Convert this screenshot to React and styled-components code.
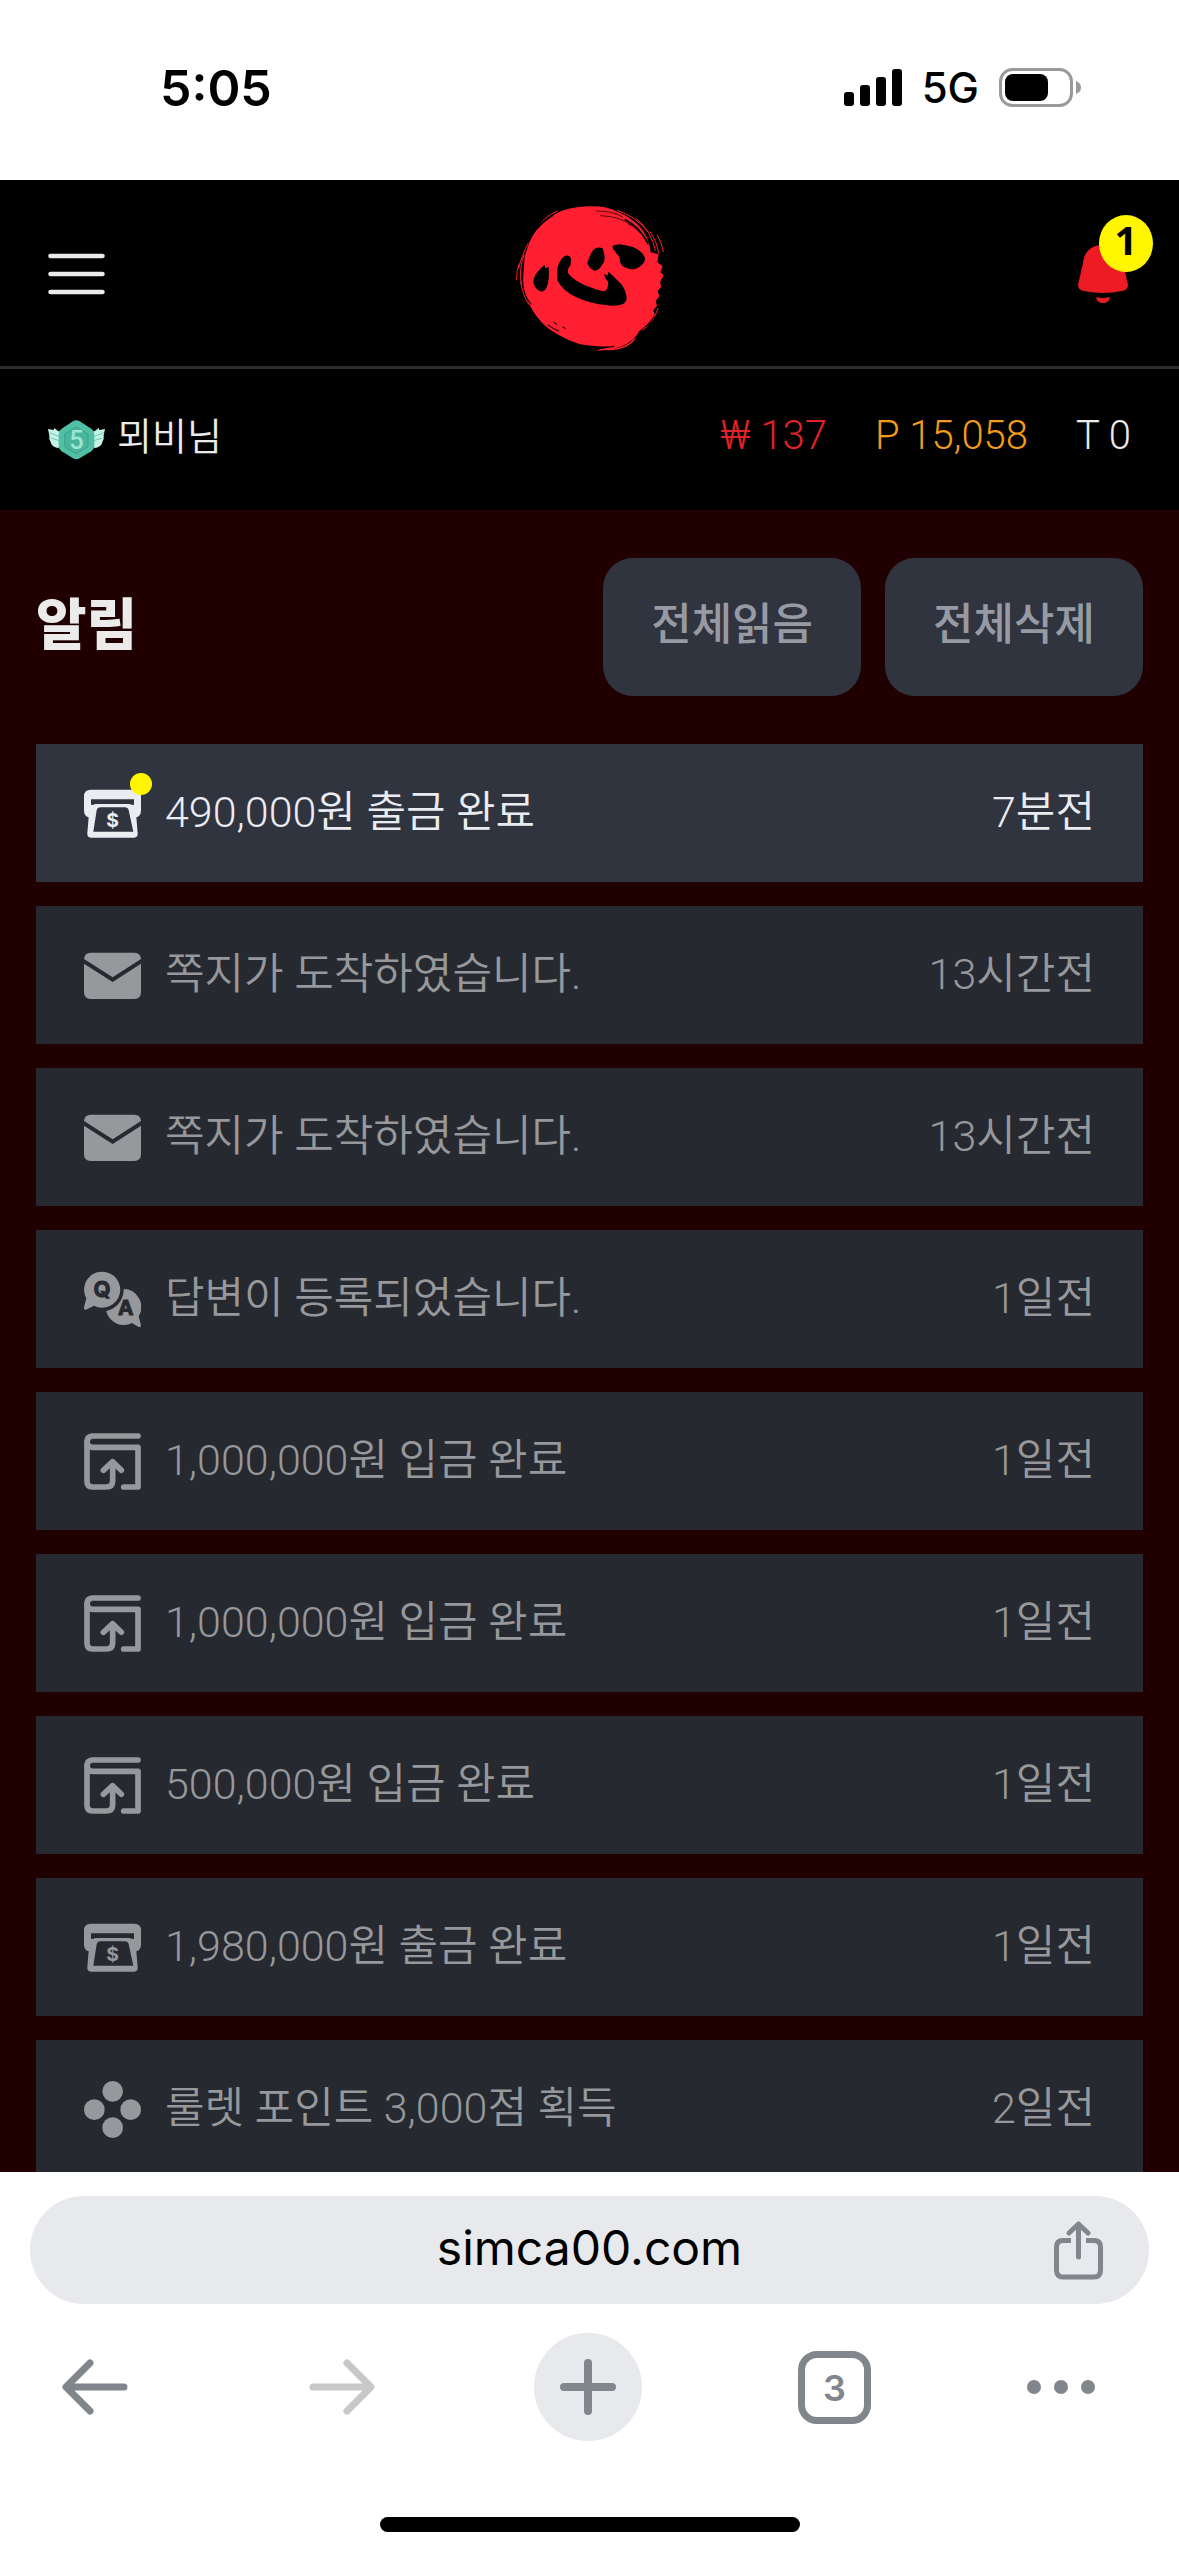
import styled, { createGlobalStyle } from "styled-components";

const GlobalStyle = createGlobalStyle`
  * {
    box-sizing: border-box;
  }

  body {
    margin: 0;
    background: #ffffff;
    font-family: Roboto, "Noto Sans CJK KR", sans-serif;
    font-weight: 350;
  }

  button {
    border: 0;
    padding: 0;
    background: none;
    font: inherit;
    color: inherit;
    cursor: pointer;
  }

  svg {
    display: block;
    flex: none;
  }
`;

const Screen = styled.div`
  display: flex;
  flex-direction: column;
  height: 100vh;
`;

/* phone status bar */

const StatusBar = styled.div`
  display: flex;
  flex: none;
  justify-content: space-between;
  align-items: center;
  height: 180px;
  padding: 0 98px 4px 160px;
  color: #000000;
  font-family: Inter, sans-serif;
`;

const Clock = styled.time`
  font-size: 50px;
  font-weight: 600;
  line-height: 60px;
`;

const Signals = styled.div`
  display: flex;
  align-items: center;
  gap: 20px;
`;

const Network = styled.span`
  font-size: 42px;
  font-weight: 500;
  line-height: 48px;
`;

/* site header */

const Header = styled.header`
  display: grid;
  flex: none;
  grid-template-columns: 1fr auto 1fr;
  align-items: center;
  padding: 14px 48px 12px;
  border-bottom: 3px solid #2b2b2b;
  background: #000000;
`;

const MenuButton = styled.button`
  justify-self: start;
  color: #ebebeb;
`;

const HomeLink = styled.a`
  display: block;
`;

const BellButton = styled.button`
  position: relative;
  display: flex;
  justify-self: end;
  justify-content: center;
  width: 57px;
`;

const BellCount = styled.span`
  position: absolute;
  top: -30px;
  right: -22px;
  width: 54px;
  height: 57px;
  border-radius: 50%;
  background: #fff600;
  color: #000000;
  font-family: "Noto Sans", sans-serif;
  font-size: 40px;
  font-weight: 700;
  line-height: 50px;
  text-align: center;
`;

const UserBar = styled.div`
  display: flex;
  flex: none;
  justify-content: space-between;
  align-items: center;
  height: 141px;
  padding: 0 48px;
  background: #000000;
  font-size: 40px;
  line-height: 48px;
`;

const User = styled.div`
  display: flex;
  align-items: center;
  gap: 12px;
  color: #ebebeb;
`;

const UserName = styled.span`
  padding-bottom: 6px;
  font-size: 38px;
`;

const Balances = styled.div`
  display: flex;
  gap: 48px;
  padding-bottom: 8px;
`;

const Balance = styled.span`
  color: ${(props) => props.$color};
`;

/* notifications */

const Content = styled.main`
  flex: 1;
  min-height: 0;
  padding: 48px 36px 0;
  overflow: hidden;
  background: #200000;
`;

const TitleRow = styled.div`
  display: flex;
  align-items: center;
  gap: 24px;
  margin-bottom: 48px;
`;

const Title = styled.h1`
  flex: 1;
  margin: 0;
  padding-bottom: 4px;
  color: #ebebeb;
  font-size: 55px;
  font-weight: 900;
  line-height: 60px;
`;

const ActionButton = styled.button`
  && {
    height: 138px;
    padding: 0 48px 12px;
    border-radius: 30px;
    background: #30343f;
    color: #979aa3;
    font-size: 44px;
    font-weight: 500;
  }
`;

const List = styled.ul`
  display: flex;
  flex-direction: column;
  gap: 24px;
  margin: 0;
  padding: 0;
  list-style: none;
`;

const Item = styled.li`
  display: flex;
  align-items: center;
  height: 138px;
  padding: 0 48px;
  background: ${(props) => (props.$unread ? "#30343f" : "#262a30")};
  color: ${(props) => (props.$unread ? "#ebecf1" : "#97989b")};
  font-size: 43px;
  line-height: 60px;
`;

const ItemIcon = styled.span`
  position: relative;
  margin-right: 24px;
`;

const UnreadDot = styled.span`
  position: absolute;
  top: -12px;
  right: -11px;
  width: 22px;
  height: 22px;
  border-radius: 50%;
  background: #fff600;
`;

const ItemText = styled.span`
  flex: 1;
  padding-bottom: 2px;
`;

const ItemTime = styled.time`
  padding-bottom: 2px;
`;

/* browser toolbar */

const Browser = styled.footer`
  flex: none;
  padding: 24px 30px;
  background: #ffffff;
  color: #80868b;
  font-family: Inter, sans-serif;
`;

const AddressBar = styled.div`
  display: grid;
  grid-template-columns: 1fr auto 1fr;
  align-items: center;
  height: 108px;
  padding: 0 46px;
  border-radius: 54px;
  background: #e8e9ed;
`;

const Address = styled.button`
  && {
    grid-column: 2;
    padding-bottom: 4px;
    color: #000000;
    font-size: 48px;
    font-weight: 400;
    line-height: 60px;
  }
`;

const ShareButton = styled.button`
  justify-self: end;
`;

const Toolbar = styled.nav`
  display: flex;
  justify-content: space-between;
  margin-top: 29px;
  padding: 0 14px 0 11px;
`;

const ToolButton = styled.button`
  && {
    display: flex;
    align-items: center;
    justify-content: ${(props) => (props.$start ? "flex-start" : "center")};
    width: 108px;
    height: 108px;
    border-radius: 50%;
    background: ${(props) => (props.$filled ? "#e8e9ed" : "none")};
  }

  &:disabled {
    color: #c8c8c8;
  }
`;

const TabCount = styled.span`
  width: 73px;
  height: 73px;
  border: 7px solid #80868b;
  border-radius: 19px;
  font-size: 36px;
  font-weight: 600;
  line-height: 60px;
  text-align: center;
`;

const HomeIndicator = styled.div`
  width: 420px;
  height: 15px;
  margin: 76px auto 0;
  border-radius: 8px;
  background: #000000;
`;

function SignalIcon() {
  return (
    <svg width="58" height="38" viewBox="0 0 58 38" fill="#000000">
      <rect x="0" y="23" width="10" height="14" rx="3" />
      <rect x="16" y="16" width="10" height="21" rx="3" />
      <rect x="32" y="8" width="10" height="29" rx="3" />
      <rect x="48" y="0" width="10" height="37" rx="3" />
    </svg>
  );
}

function BatteryIcon() {
  return (
    <svg width="82" height="40" viewBox="0 0 82 40">
      <rect x="1.5" y="1.5" width="71" height="36" rx="12" fill="none" stroke="#999999" strokeWidth="3" />
      <rect x="6" y="6" width="43" height="27" rx="8" fill="#000000" />
      <path d="M77 13q5 2 5 6.500t-5 6.500z" fill="#999999" />
    </svg>
  );
}

function MenuIcon() {
  return (
    <svg width="57" height="42" viewBox="0 0 57 42" stroke="currentColor" strokeWidth="4.500" strokeLinecap="round">
      <path d="M2.500 3H54.500M2.500 21H54.500M2.500 39H54.500" />
    </svg>
  );
}

function Logo() {
  return (
    <svg width="150" height="160" viewBox="105 27 450 480" role="img" aria-label="simca">
      <path
        fill="#ff1f30"
        d="M148 172Q166 128 210 98L226 87Q262 66 325 64Q378 62 412 80Q452 96 478 124Q506 152 512 202L536 208L532 232L548 244L541 262L551 270L540 292L544 306L533 318L538 334L527 348L531 362L520 376L524 390Q508 416 478 438Q466 462 438 478Q404 497 344 497Q372 490 392 484Q340 486 300 478Q262 466 232 448Q180 420 152 366Q126 318 130 272L134 214Z"
      />
      <g fill="none" stroke="#ff1f30" strokeLinecap="round">
        <path strokeWidth="3" d="M144 176Q122 220 116 250M118 236Q108 258 110 284M132 210Q116 250 124 300M122 290Q128 330 146 358" />
        <path strokeWidth="3" d="M180 118Q196 94 232 78M412 76Q470 96 504 140M470 102Q514 138 526 196M532 150Q546 174 550 200M510 140Q530 168 536 204" />
        <path strokeWidth="3" d="M520 402Q506 424 486 436M534 370Q528 392 514 408" />
        <path strokeWidth="4" d="M464 462Q438 494 380 494" />
      </g>
      <g fill="none" stroke="#000000" strokeLinecap="round">
        <path strokeWidth="5" d="M172 130Q188 108 216 92M436 104Q480 126 504 176" />
        <path strokeWidth="2" d="M362 92Q420 94 456 122Q484 144 500 166M350 78Q400 78 428 96M446 118L470 126L482 142" />
        <path strokeWidth="3" d="M132 320Q140 344 154 358M204 420Q220 432 236 438M222 412L230 418M248 426L256 430M500 424Q514 412 522 396M350 492Q380 488 402 484" />
      </g>
      <g fill="#000000">
        <path d="M172 262Q182 248 194 240L196 250L206 246Q209 284 201 304Q196 320 183 320Q163 312 160 290Q162 272 172 262Z" />
        <path d="M254 213Q270 208 273 222L272 240Q261 252 264 264Q284 292 335 308Q360 318 374 319Q386 310 384 290L376 280L372 266L382 272L386 260L394 268Q412 286 426 300Q440 322 440 342Q436 358 420 360Q400 364 376 360Q330 356 288 336Q248 318 232 286Q226 234 254 213Z" />
        <path d="M340 194Q352 184 368 190L374 212Q376 230 366 240Q356 258 344 257Q326 250 322 234Q328 212 340 194Z" />
        <path d="M398 182Q414 174 432 180Q464 184 482 200Q496 212 495 226Q488 242 474 248Q460 256 442 250Q424 244 420 230Q420 214 410 206Q404 198 398 190Z" />
      </g>
    </svg>
  );
}

function BellIcon() {
  return (
    <svg width="50" height="58" viewBox="0 0 50 58" fill="#ed1c24">
      <path d="M25 0C12 0 6 8 5 18L0 40Q0 45 6 46Q25 50 44 46Q50 45 50 40L45 18C44 8 38 0 25 0Z" />
      <path d="M18 52Q25 54 32 52Q31 58 25 58T18 52Z" />
    </svg>
  );
}

function LevelIcon() {
  return (
    <svg width="57" height="40" viewBox="0 0 171 120">
      <g fill="#c5f3e6">
        <path d="M0 27L17 30L19 24L30 33L44 36V80L28 84Q10 80 8 66Q2 58 4 46Z" />
        <path d="M171 27L154 30L152 24L141 33L127 36V80L143 84Q161 80 163 66Q169 58 167 46Z" />
      </g>
      <path d="M4 38L34 50M8 54L34 62M167 38L137 50M163 54L137 62" stroke="#6fc9b3" strokeWidth="3" />
      <path
        d="M76 3Q85 -2 94 3L130 26Q139 32 139 42V78Q139 88 130 94L95 115Q85 121 75 115L41 94Q32 88 32 78V42Q32 32 41 26Z"
        fill="#4fc0a5"
      />
      <path d="M85 21L120 42V80L85 101L50 80V42Z" fill="#49b59c" stroke="#35937d" strokeWidth="2" />
      <text x="85" y="87" fill="#9be6d3" fontFamily="Roboto, sans-serif" fontSize="76" fontWeight="500" textAnchor="middle">
        5
      </text>
    </svg>
  );
}

function WithdrawIcon() {
  return (
    <svg width="57" height="57" viewBox="0 0 171 171" fill="currentColor">
      <path
        fillRule="evenodd"
        d="M20 14H151Q171 14 171 34V76Q171 94 157 97L161 145Q162 158 150 158H21Q9 158 10 145L14 97Q0 94 0 76V34Q0 14 20 14ZM21 43V60Q30 60 34 57H137Q141 60 150 60V43ZM50 67Q40 67 38 76L28 140H148L134 76Q132 67 122 67Z"
      />
      <text x="86" y="125" fontFamily="Inter, sans-serif" fontSize="58" fontWeight="700" textAnchor="middle">
        $
      </text>
    </svg>
  );
}

function MessageIcon() {
  return (
    <svg width="57" height="57" viewBox="0 0 171 171" fill="currentColor">
      <path d="M0 36Q2 17 20 17H151Q169 17 171 36L86 91Z" />
      <path d="M0 50L86 105L171 50V136Q171 156 151 156H20Q0 156 0 136Z" />
    </svg>
  );
}

function AnswerIcon() {
  return (
    <svg width="57" height="57" viewBox="0 0 171 171" fill="currentColor" fontFamily="Inter, sans-serif" fontWeight="700" textAnchor="middle">
      <path d="M118 54A54 54 0 0 1 164 136L171 163Q171 170 164 168L144 156A54 54 0 1 1 118 54Z" />
      <circle cx="54" cy="56" r="65" fill="#262a30" />
      <path d="M54 2A54 54 0 1 1 30 104L6 116Q-1 117 0 109L7 82A54 54 0 0 1 54 2Z" />
      <g fill="#262a30" stroke="#262a30" strokeWidth="3">
        <text x="54" y="78" fontSize="66">
          Q
        </text>
        <text x="125" y="133" fontSize="62">
          A
        </text>
      </g>
    </svg>
  );
}

function DepositIcon() {
  return (
    <svg width="57" height="57" viewBox="0 0 171 171" fill="none" stroke="currentColor" strokeWidth="17" strokeLinecap="round" strokeLinejoin="round">
      <path d="M162 9H24Q9 11 9 26V145Q9 162 26 162H66Q86 162 86 143V88M58 112L86 86L112 112" />
      <path d="M9 26Q11 43 26 43H162V162H119" />
    </svg>
  );
}

function PointIcon() {
  return (
    <svg width="57" height="57" viewBox="0 0 171 171" fill="currentColor">
      <circle cx="86" cy="31" r="31" />
      <circle cx="31" cy="86" r="31" />
      <circle cx="140" cy="86" r="31" />
      <circle cx="86" cy="140" r="31" />
    </svg>
  );
}

function ShareIcon() {
  return (
    <svg width="49" height="59" viewBox="0 0 49 59" fill="none" stroke="currentColor" strokeWidth="5" strokeLinecap="round" strokeLinejoin="round">
      <path strokeLinecap="butt" d="M17 19.500H9Q2.500 19.500 2.500 26V49Q2.500 56 9 56H40Q46.500 56 46.500 49V26Q46.500 19.500 40 19.500H32" />
      <path d="M24.500 36V3.500M15 12L24.500 3L34 12" />
    </svg>
  );
}

function ArrowIcon({ forward }) {
  return (
    <svg width="66" height="56" viewBox="0 0 66 56" fill="none" stroke="currentColor" strokeWidth="7" strokeLinecap="round" strokeLinejoin="round">
      <path d={forward ? "M4 28H61M38 4L62 28L38 52" : "M62 28H5M28 4L4 28L28 52"} />
    </svg>
  );
}

function PlusIcon() {
  return (
    <svg width="56" height="56" viewBox="0 0 56 56" stroke="currentColor" strokeWidth="8" strokeLinecap="round">
      <path d="M4 28H52M28 4V52" />
    </svg>
  );
}

function MoreIcon() {
  return (
    <svg width="68" height="14" viewBox="0 0 68 14" fill="currentColor">
      <circle cx="7" cy="7" r="7" />
      <circle cx="34" cy="7" r="7" />
      <circle cx="61" cy="7" r="7" />
    </svg>
  );
}

const icons = {
  withdraw: WithdrawIcon,
  message: MessageIcon,
  answer: AnswerIcon,
  deposit: DepositIcon,
  point: PointIcon,
};

const notifications = [
  { id: 1, type: "withdraw", text: "490,000원 출금 완료", time: "7분전", unread: true },
  { id: 2, type: "message", text: "쪽지가 도착하였습니다.", time: "13시간전" },
  { id: 3, type: "message", text: "쪽지가 도착하였습니다.", time: "13시간전" },
  { id: 4, type: "answer", text: "답변이 등록되었습니다.", time: "1일전" },
  { id: 5, type: "deposit", text: "1,000,000원 입금 완료", time: "1일전" },
  { id: 6, type: "deposit", text: "1,000,000원 입금 완료", time: "1일전" },
  { id: 7, type: "deposit", text: "500,000원 입금 완료", time: "1일전" },
  { id: 8, type: "withdraw", text: "1,980,000원 출금 완료", time: "1일전" },
  { id: 9, type: "point", text: "룰렛 포인트 3,000점 획득", time: "2일전" },
];

function Notification({ type, text, time, unread }) {
  const Icon = icons[type];
  return (
    <Item $unread={unread}>
      <ItemIcon>
        <Icon />
        {unread && <UnreadDot />}
      </ItemIcon>
      <ItemText>{text}</ItemText>
      <ItemTime>{time}</ItemTime>
    </Item>
  );
}

function App() {
  return (
    <Screen>
      <GlobalStyle />
      <StatusBar>
        <Clock>5:05</Clock>
        <Signals>
          <SignalIcon />
          <Network>5G</Network>
          <BatteryIcon />
        </Signals>
      </StatusBar>
      <Header>
        <MenuButton aria-label="메뉴">
          <MenuIcon />
        </MenuButton>
        <HomeLink href="#">
          <Logo />
        </HomeLink>
        <BellButton aria-label="알림">
          <BellIcon />
          <BellCount>1</BellCount>
        </BellButton>
      </Header>
      <UserBar>
        <User>
          <LevelIcon />
          <UserName>뫼비님</UserName>
        </User>
        <Balances>
          <Balance $color="#e02229">₩ 137</Balance>
          <Balance $color="#f39c1b">P 15,058</Balance>
          <Balance $color="#ebebeb">T 0</Balance>
        </Balances>
      </UserBar>
      <Content>
        <TitleRow>
          <Title>알림</Title>
          <ActionButton>전체읽음</ActionButton>
          <ActionButton>전체삭제</ActionButton>
        </TitleRow>
        <List>
          {notifications.map((item) => (
            <Notification key={item.id} {...item} />
          ))}
        </List>
      </Content>
      <Browser>
        <AddressBar>
          <Address>simca00.com</Address>
          <ShareButton aria-label="공유">
            <ShareIcon />
          </ShareButton>
        </AddressBar>
        <Toolbar>
          <ToolButton aria-label="뒤로">
            <ArrowIcon />
          </ToolButton>
          <ToolButton aria-label="앞으로" disabled>
            <ArrowIcon forward />
          </ToolButton>
          <ToolButton aria-label="새 탭" $filled>
            <PlusIcon />
          </ToolButton>
          <ToolButton>
            <TabCount>3</TabCount>
          </ToolButton>
          <ToolButton aria-label="더보기" $start>
            <MoreIcon />
          </ToolButton>
        </Toolbar>
        <HomeIndicator />
      </Browser>
    </Screen>
  );
}

export default App;
